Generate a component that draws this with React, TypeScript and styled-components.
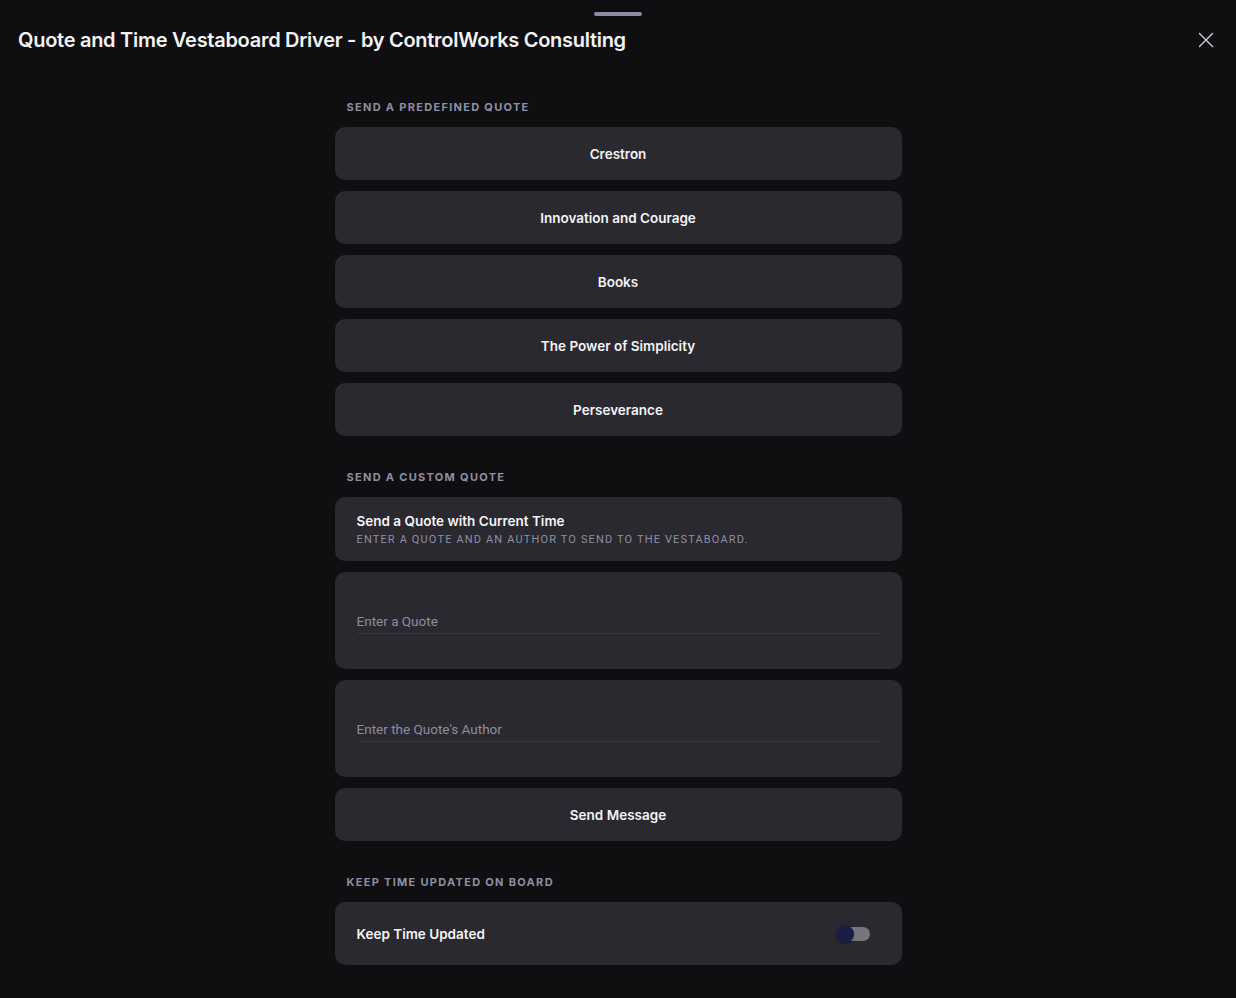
import React, { useState } from 'react';
import styled, { createGlobalStyle } from 'styled-components';

const quotes = ['Crestron', 'Innovation and Courage', 'Books', 'The Power of Simplicity', 'Perseverance'];

function App() {
  const [quote, setQuote] = useState('');
  const [author, setAuthor] = useState('');
  const [keepTime, setKeepTime] = useState(false);

  return (
    <>
      <GlobalStyle />
      <Sheet>
        <Handle />
        <Header>
          <Title>Quote and Time Vestaboard Driver - by ControlWorks Consulting</Title>
          <CloseButton aria-label="Close">
            <svg width="16" height="16" viewBox="0 0 16 16" fill="none">
              <path d="M1.5 1.5L14.5 14.5M14.5 1.5L1.5 14.5" stroke="#cfcfd4" strokeWidth="1.4" strokeLinecap="round" />
            </svg>
          </CloseButton>
        </Header>

        <Content>
          <SectionLabel $first>Send a predefined quote</SectionLabel>
          <Stack>
            {quotes.map((q) => (
              <ActionButton key={q}>{q}</ActionButton>
            ))}
          </Stack>

          <SectionLabel>Send a custom quote</SectionLabel>
          <Stack>
            <InfoCard>
              <InfoTitle>Send a Quote with Current Time</InfoTitle>
              <InfoSub>Enter a quote and an author to send to the Vestaboard.</InfoSub>
            </InfoCard>
            <InputCard>
              <TextInput placeholder="Enter a Quote" value={quote} onChange={(e) => setQuote(e.target.value)} />
            </InputCard>
            <InputCard>
              <TextInput placeholder="Enter the Quote's Author" value={author} onChange={(e) => setAuthor(e.target.value)} />
            </InputCard>
            <ActionButton>Send Message</ActionButton>
          </Stack>

          <SectionLabel>Keep time updated on board</SectionLabel>
          <Stack>
            <ToggleCard>
              <ToggleLabel>Keep Time Updated</ToggleLabel>
              <Switch $on={keepTime} onClick={() => setKeepTime(!keepTime)} aria-label="Keep Time Updated">
                <Thumb $on={keepTime} />
              </Switch>
            </ToggleCard>
          </Stack>
        </Content>
      </Sheet>
    </>
  );
}

const GlobalStyle = createGlobalStyle`
  html, body {
    margin: 0;
    padding: 0;
    background: #0f0f11;
  }
  body {
    font-family: Inter, "Noto Sans", sans-serif;
    color: #f2f2f5;
  }
  * {
    box-sizing: border-box;
  }
`;

const Sheet = styled.div`
  min-height: 998px;
  background: #0f0f11;
  display: flex;
  flex-direction: column;
`;

const Handle = styled.div`
  width: 48px;
  height: 4px;
  border-radius: 2px;
  background: #8d8ba6;
  margin: 12px auto 0;
`;

const Header = styled.div`
  display: flex;
  align-items: center;
  justify-content: space-between;
  padding: 12px 22px 0 18px;
`;

const Title = styled.h1`
  margin: 0;
  font-size: 20px;
  line-height: 24px;
  font-weight: 600;
  letter-spacing: -0.28px;
  color: #f4f4f7;
`;

const CloseButton = styled.button`
  border: none;
  background: none;
  padding: 0;
  width: 16px;
  height: 16px;
  display: flex;
  cursor: pointer;
`;

const Content = styled.div`
  width: 567px;
  margin: 0 auto;
  display: flex;
  flex-direction: column;
`;

const SectionLabel = styled.div<{ $first?: boolean }>`
  margin: ${(p) => (p.$first ? '48px' : '34px')} 0 13px 12px;
  font-size: 11px;
  line-height: 14px;
  font-weight: 700;
  letter-spacing: 1.3px;
  text-transform: uppercase;
  color: #8f8ea4;
`;

const Stack = styled.div`
  display: flex;
  flex-direction: column;
  gap: 11px;
`;

const Card = styled.div`
  background: #29292f;
  border-radius: 10px;
`;

const ActionButton = styled.button`
  height: 53px;
  border: none;
  border-radius: 10px;
  background: #29292f;
  color: #f4f4f7;
  font-family: Inter, "Noto Sans", sans-serif;
  font-size: 13.5px;
  font-weight: 600;
  cursor: pointer;
`;

const InfoCard = styled(Card)`
  height: 64px;
  padding: 16px 22px 0;
`;

const InfoTitle = styled.div`
  font-size: 13.5px;
  line-height: 16px;
  font-weight: 600;
  color: #f4f4f7;
`;

const InfoSub = styled.div`
  margin-top: 4px;
  font-family: Roboto, "Noto Sans", sans-serif;
  font-size: 11px;
  line-height: 14px;
  letter-spacing: 1.15px;
  text-transform: uppercase;
  color: #8f8ea4;
`;

const InputCard = styled(Card)`
  height: 97px;
  padding: 38px 22px 0;
`;

const TextInput = styled.input`
  width: 100%;
  height: 22px;
  border: none;
  border-bottom: 1px solid #37363d;
  background: transparent;
  padding: 0 0 3px;
  font-family: Roboto, "Noto Sans", sans-serif;
  font-size: 13.5px;
  color: #e8e8ee;
  outline: none;

  &::placeholder {
    color: #8e8ca2;
  }
`;

const ToggleCard = styled(Card)`
  height: 63px;
  display: flex;
  align-items: center;
  justify-content: space-between;
  padding: 0 32px 0 22px;
`;

const ToggleLabel = styled.div`
  font-size: 13.5px;
  font-weight: 600;
  color: #f4f4f7;
`;

const Switch = styled.button<{ $on: boolean }>`
  position: relative;
  width: 30px;
  height: 14px;
  border: none;
  padding: 0;
  border-radius: 7px;
  background: ${(p) => (p.$on ? '#5b5fa8' : '#77767d')};
  cursor: pointer;
`;

const Thumb = styled.span<{ $on: boolean }>`
  position: absolute;
  top: -2px;
  left: ${(p) => (p.$on ? '14px' : '-4px')};
  width: 18px;
  height: 18px;
  border-radius: 50%;
  background: #1b1e44;
  box-shadow: 0 1px 2px rgba(0, 0, 0, 0.4);
`;

export default App;
